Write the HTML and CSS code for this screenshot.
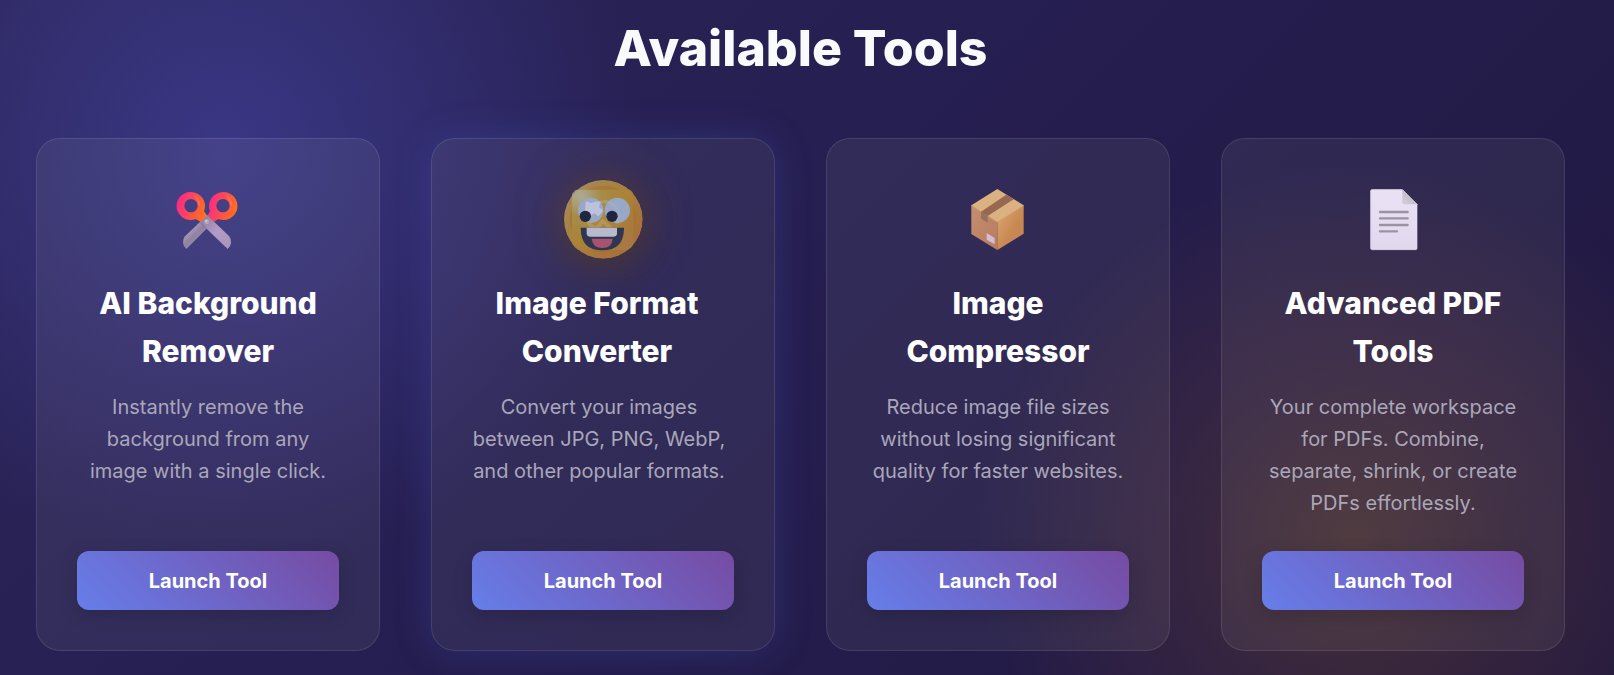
FILE: index.html
```html
<!DOCTYPE html>
<html lang="en">
<head>
  <meta charset="UTF-8" />
  <meta name="viewport" content="width=device-width, initial-scale=1.0"/>
  <title>Available Tools</title>
  <link rel="stylesheet" href="styles.css">
</head>
<body>

  <section class="tools">
    <h2 class="section-title">Available Tools</h2>

    <div class="tools-grid">
      <!-- Background remover -->
      <div class="tool-card">
        <svg class="tool-icon" viewBox="24 27 240 240" aria-hidden="true">
          <defs>
            <linearGradient id="handle" x1="0" x2="1" y1="0.3" y2="0.6">
              <stop offset="0.1" stop-color="#fb2d80"/>
              <stop offset="1" stop-color="#ff7219"/>
            </linearGradient>
            <linearGradient id="blade-back" x1="0.2" x2="0.8" y1="0.2" y2="0.8">
              <stop offset="0" stop-color="#b9a6cd"/>
              <stop offset="0.45" stop-color="#8f819f"/>
              <stop offset="1" stop-color="#b29dc9"/>
            </linearGradient>
            <linearGradient id="blade-front" x1="0" x2="1" y1="0" y2="1">
              <stop offset="0" stop-color="#887b98"/>
              <stop offset="0.5" stop-color="#b19cc6"/>
              <stop offset="1" stop-color="#a795b8"/>
            </linearGradient>
          </defs>
          <path d="M124 152L75 199q-7 8-6 20 1 11 10 18L153 163z" fill="url(#blade-back)"/>
          <path fill-rule="evenodd" d="M189 66a42 42 0 0 0-39 58l-8 13 19 19 14-9a42 42 0 1 0 14-81zm0 21a20 20 0 1 1 0 40 20 20 0 0 1 0-40z" fill="url(#handle)"/>
          <path fill-rule="evenodd" d="M93 66a42 42 0 1 0 14 81l16 9 19-19-10-13A42 42 0 0 0 93 66zm0 21a20 20 0 1 1 0 40 20 20 0 0 1 0-40z" fill="url(#handle)"/>
          <path d="M121 158l20-23 66 63q7 8 6 21-1 11-10 18z" fill="url(#blade-front)"/>
          <path d="M104 80q15 9 14 28M200 80q15 9 14 28" fill="none" stroke="#ff8c66" stroke-width="4" opacity="0.5"/>
          <path d="M121 158l18 18" stroke="#794ca0" stroke-width="2"/>
          <circle cx="140" cy="155" r="7" fill="#b9a9bf"/>
          <circle cx="138" cy="152" r="3" fill="#d5cad9"/>
        </svg>
        <h3>AI Background Remover</h3>
        <p>Instantly remove the background from any image with a single click.</p>
        <button class="launch-btn" type="button">Launch Tool</button>
      </div>

      <!-- Format converter -->
      <div class="tool-card active">
        <svg class="tool-icon glow" viewBox="69 57 240 240" aria-hidden="true">
          <defs>
            <linearGradient id="face" x1="0" x2="1" y1="0" y2="1">
              <stop offset="0" stop-color="#a58a5e"/>
              <stop offset="0.45" stop-color="#a9803c"/>
              <stop offset="1" stop-color="#a56a3c"/>
            </linearGradient>
            <radialGradient id="shine" cx="0.15" cy="0.12" r="0.95">
              <stop offset="0" stop-color="#aebbb4"/>
              <stop offset="0.35" stop-color="#a5924f"/>
              <stop offset="0.8" stop-color="#ab8636"/>
              <stop offset="1" stop-color="#a87b45"/>
            </radialGradient>
          </defs>
          <circle cx="190" cy="178" r="118" fill="url(#face)"/>
          <circle cx="190" cy="178" r="101" fill="#a8722a" opacity="0.6"/>
          <rect x="96" y="89" width="184" height="181" rx="8" fill="url(#shine)" opacity="0.75"/>
          <circle cx="152" cy="151" r="38" fill="#98a8c6"/>
          <circle cx="232" cy="151" r="38" fill="#98a8c6"/>
          <path d="M137 124l17 5q14-7 28-5l-5 18 12 10-14 17-12-10-20 14-8-16z" fill="#bdc1dc"/>
          <path d="M176 129q26-12 48 10 18 24 6 52" fill="none" stroke="#b3b4bb" stroke-width="10" opacity="0.4"/>
          <path d="M144 180q4 20 26 26l18-23 24 20" fill="none" stroke="#bda373" stroke-width="12" opacity="0.5"/>
          <circle cx="136" cy="169" r="17" fill="#202642"/>
          <circle cx="216" cy="169" r="17" fill="#202642"/>
          <path d="M122 203h130q0 68-65 68t-65-68z" fill="#2f3552"/>
          <path d="M155 236h63q-2 28-31 28t-32-28z" fill="#a65370"/>
          <path d="M140 203h91v17q0 10-10 10h-71q-10 0-10-10z" fill="#b7bacf"/>
        </svg>
        <h3>Image Format Converter</h3>
        <p>Convert your images between JPG, PNG, WebP, and other popular formats.</p>
        <button class="launch-btn" type="button">Launch Tool</button>
      </div>

      <!-- Compressor -->
      <div class="tool-card">
        <svg class="tool-icon" viewBox="24 27 240 240" aria-hidden="true">
          <defs>
            <linearGradient id="box-left" x1="0" x2="1" y1="0" y2="1">
              <stop offset="0" stop-color="#c58e6e"/>
              <stop offset="1" stop-color="#b97b60"/>
            </linearGradient>
            <linearGradient id="box-right" x1="0" x2="1" y1="0" y2="1">
              <stop offset="0" stop-color="#dba873"/>
              <stop offset="0.6" stop-color="#c88850"/>
              <stop offset="1" stop-color="#c18458"/>
            </linearGradient>
          </defs>
          <path d="M142 57l79 49-79 50-78-50z" fill="#dcb181"/>
          <path d="M64 106l78 50v84l-78-48z" fill="url(#box-left)"/>
          <path d="M221 106l-79 50v84l79-49z" fill="url(#box-right)"/>
          <path d="M64 106l78 50 79-50" fill="none" stroke="#e4b987" stroke-width="2"/>
          <path d="M169 74l22 14-78 50-20-13z" fill="#96684f"/>
          <path d="M93 125l20 13v20l-20-12z" fill="#96705f"/>
          <path d="M110 189l24 15v19l-24-14z" fill="#d1bdd7"/>
        </svg>
        <h3>Image Compressor</h3>
        <p>Reduce image file sizes without losing significant quality for faster websites.</p>
        <button class="launch-btn" type="button">Launch Tool</button>
      </div>

      <!-- PDF tools -->
      <div class="tool-card">
        <svg class="tool-icon" viewBox="24 27 240 240" aria-hidden="true">
          <defs>
            <linearGradient id="sheet" x1="0" x2="0" y1="0" y2="1">
              <stop offset="0" stop-color="#eae2f4"/>
              <stop offset="1" stop-color="#e1d8ee"/>
            </linearGradient>
            <linearGradient id="fold" x1="1" x2="0" y1="0" y2="1">
              <stop offset="0.4" stop-color="#c0bcc6"/>
              <stop offset="1" stop-color="#d6d0dc"/>
            </linearGradient>
          </defs>
          <path d="M82 58h90l45 45v131q0 6-6 6H82q-6 0-6-6V64q0-6 6-6z" fill="url(#sheet)"/>
          <path d="M77 236V64q0-5 5-5h89M80 239h132q4 0 4-5" fill="none" stroke="#c5bbd8" stroke-width="2"/>
          <path d="M172 58l45 45h-39q-6 0-6-6z" fill="url(#fold)"/>
          <path d="M105 126h83M105 145h83M105 165h83M105 184h51" stroke="#9b93a3" stroke-width="7" stroke-linecap="round"/>
        </svg>
        <h3>Advanced PDF Tools</h3>
        <p>Your complete workspace for PDFs. Combine, separate, shrink, or create PDFs effortlessly.</p>
        <button class="launch-btn" type="button">Launch Tool</button>
      </div>
    </div>
  </section>

</body>
</html>
```

FILE: styles.css
```css
* { box-sizing: border-box; }

body {
  margin: 0;
  min-height: 100vh;
  background:
    radial-gradient(circle at 14% 23%, rgba(75, 75, 180, 0.5), rgba(75, 75, 180, 0) 420px),
    radial-gradient(circle at 84% 80%, rgba(130, 85, 30, 0.36), rgba(120, 70, 50, 0.2) 200px, rgba(120, 70, 60, 0) 380px),
    linear-gradient(135deg, #2c2659 0%, #261f52 40%, #20183f 100%);
  color: #fff;
  font-family: Inter, sans-serif;
}

.tools {
  padding: 8px 49px 24px 36px;
}

.section-title {
  margin: 0 0 50px;
  color: #f9fafc;
  font-size: 50px;
  font-weight: 800;
  line-height: 80px;
  text-align: center;
}

.tools-grid {
  display: grid;
  grid-template-columns: repeat(4, 1fr);
  gap: 51px;
}

/* Cards */
.tool-card {
  display: flex;
  flex-direction: column;
  align-items: center;
  padding: 40px;
  background: rgba(255, 250, 225, 0.06);
  border: 1px solid rgba(255, 255, 255, 0.1);
  border-radius: 24px;
  text-align: center;
}

.tool-card.active {
  box-shadow: 0 0 36px rgba(70, 95, 210, 0.26);
}

.tool-icon {
  width: 80px;
  height: 80px;
  margin-bottom: 20px;
}

.tool-icon.glow {
  border-radius: 50%;
  box-shadow: 0 0 50px rgba(150, 95, 10, 0.35), 0 8px 30px rgba(60, 45, 20, 0.35);
}

.tool-card h3 {
  margin: 0 0 16px;
  font-size: 30px;
  font-weight: 800;
  line-height: 48px;
}

.tool-card p {
  margin: 0 0 32px;
  color: #aaa7b9;
  font-size: 20px;
  line-height: 32px;
}

.tool-card.active h3 { padding-right: 12px; }
.tool-card.active p { padding-right: 8px; }

.launch-btn {
  width: 100%;
  height: 59px;
  margin-top: auto;
  border: none;
  border-radius: 12px;
  background: linear-gradient(45deg, #667eea, #764ba2);
  box-shadow: 0 5px 19px rgba(0, 0, 0, 0.16);
  color: #fff;
  font-family: inherit;
  font-size: 20px;
  font-weight: 700;
  cursor: pointer;
}
```
